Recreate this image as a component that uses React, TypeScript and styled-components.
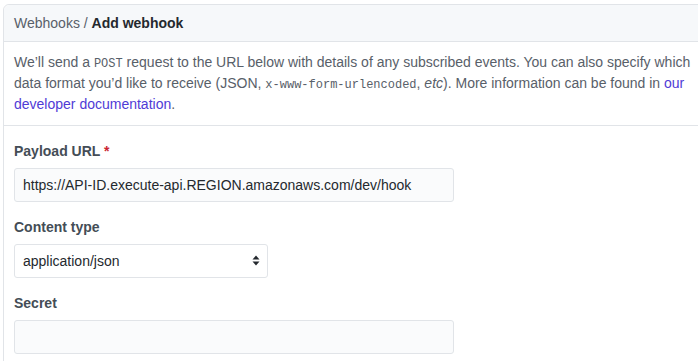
import styled, { createGlobalStyle } from 'styled-components';

const GlobalStyle = createGlobalStyle`
  html, body {
    margin: 0;
    padding: 0;
    background: #ffffff;
    overflow: hidden;
  }
  body {
    font-family: "Liberation Sans", Arial, sans-serif;
    font-size: 14px;
    line-height: 1.5;
    color: #24292e;
  }
`;

const Page = styled.div`
  padding: 4px 0 0 3px;
`;

const Panel = styled.div`
  width: 716px;
  border: 1px solid #e1e4e8;
  border-radius: 6px;
  box-sizing: border-box;
`;

const Header = styled.div`
  background: #f6f8fa;
  border-bottom: 1px solid #e1e4e8;
  border-radius: 6px 6px 0 0;
  padding: 8px 10px 7px;
  line-height: 21px;
  color: #586069;
`;

const Current = styled.strong`
  color: #24292e;
  font-weight: bold;
`;

const Intro = styled.p`
  margin: 0;
  padding: 10px 10px 10px;
  line-height: 21px;
  color: #586069;
  border-bottom: 1px solid #e1e4e8;
`;

const Code = styled.code`
  font-family: "Liberation Mono", "DejaVu Sans Mono", monospace;
  font-size: 12px;
  line-height: 1;
`;

const Link = styled.a`
  color: #4f3bd6;
  text-decoration: none;
`;

const Form = styled.form`
  padding: 0 10px;
`;

const Group = styled.div`
  margin: 15px 0;
  display: flex;
  flex-direction: column;
  align-items: flex-start;
`;

const Label = styled.label`
  font-weight: bold;
  color: #444d56;
  line-height: 21px;
  margin-bottom: 6px;
`;

const Required = styled.span`
  color: #cb2431;
`;

const Input = styled.input`
  width: 440px;
  height: 34px;
  box-sizing: border-box;
  padding: 5px 8px;
  font-family: "Liberation Sans", Arial, sans-serif;
  font-size: 14px;
  color: #24292e;
  background: #fafbfc;
  border: 1px solid #e1e4e8;
  border-radius: 3px;
  outline: none;
`;

const SelectWrap = styled.div`
  position: relative;
  width: 254px;
`;

const Select = styled.select`
  appearance: none;
  width: 100%;
  height: 34px;
  box-sizing: border-box;
  padding: 5px 24px 5px 8px;
  font-family: "Liberation Sans", Arial, sans-serif;
  font-size: 14px;
  color: #24292e;
  background: #ffffff;
  border: 1px solid #e1e4e8;
  border-radius: 3px;
  outline: none;
`;

const Arrows = styled.svg`
  position: absolute;
  right: 8px;
  top: 11px;
  pointer-events: none;
`;

export default function App() {
  return (
    <>
      <GlobalStyle />
      <Page>
        <Panel>
          <Header>
            Webhooks / <Current>Add webhook</Current>
          </Header>
          <Intro>
            We’ll send a <Code>POST</Code> request to the URL below with details of any
            subscribed events. You can also specify which data format you’d like to receive
            (JSON, <Code>x-www-form-urlencoded</Code>, <em>etc</em>). More information can be
            found in <Link href="#">our developer documentation</Link>.
          </Intro>
          <Form onSubmit={(e) => e.preventDefault()}>
            <Group>
              <Label>
                Payload URL <Required>*</Required>
              </Label>
              <Input
                type="text"
                defaultValue="https://API-ID.execute-api.REGION.amazonaws.com/dev/hook"
              />
            </Group>
            <Group>
              <Label>Content type</Label>
              <SelectWrap>
                <Select defaultValue="json">
                  <option value="json">application/json</option>
                  <option value="form">application/x-www-form-urlencoded</option>
                </Select>
                <Arrows width="8" height="11" viewBox="0 0 8 11">
                  <path d="M4 0.5 L7.5 4.5 H0.5 Z" fill="#24292e" />
                  <path d="M4 10.5 L7.5 6.5 H0.5 Z" fill="#24292e" />
                </Arrows>
              </SelectWrap>
            </Group>
            <Group>
              <Label>Secret</Label>
              <Input type="password" />
            </Group>
          </Form>
        </Panel>
      </Page>
    </>
  );
}
